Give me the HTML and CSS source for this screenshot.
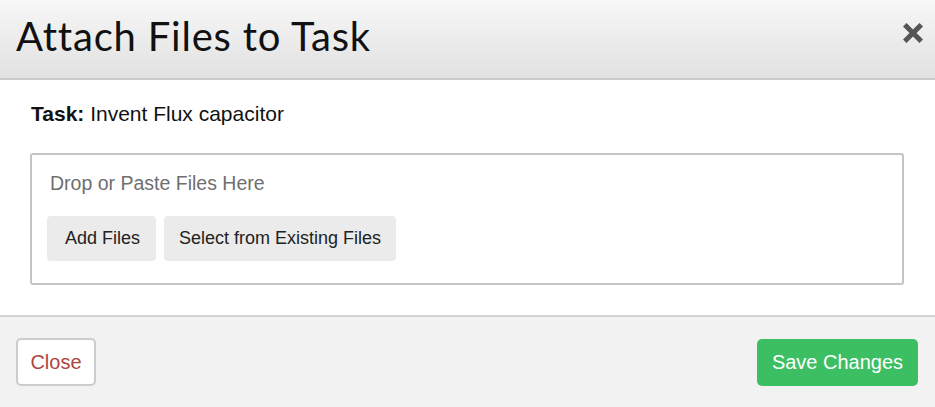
FILE: index.html
```html
<!DOCTYPE html>
<html>
<head>
<meta charset="utf-8">
<link rel="stylesheet" href="styles.css">
</head>
<body>
<div class="modal">
  <div class="modal-header">
    <h1 class="modal-title">Attach Files to Task</h1>
    <button class="close-x" aria-label="Close">
      <svg width="20" height="20" viewBox="0 0 20 20"><path d="M3.5 3.5 L16.5 16.5 M16.5 3.5 L3.5 16.5" stroke="#555" stroke-width="5" stroke-linecap="square"/></svg>
    </button>
  </div>
  <div class="modal-body">
    <p class="task-line"><strong>Task:</strong> Invent Flux capacitor</p>
    <div class="dropzone">
      <div class="drop-hint">Drop or Paste Files Here</div>
      <div class="drop-actions">
        <button class="btn-gray btn-add">Add Files</button>
        <button class="btn-gray">Select from Existing Files</button>
      </div>
    </div>
  </div>
  <div class="modal-footer">
    <button class="btn-close">Close</button>
    <button class="btn-save">Save Changes</button>
  </div>
</div>
</body>
</html>
```
FILE: styles.css
```css
html, body {
  margin: 0;
  padding: 0;
  background: #fff;
}
body {
  font-family: "Liberation Sans", Arial, sans-serif;
  color: #111;
}
.modal {
  width: 935px;
  height: 407px;
  display: flex;
  flex-direction: column;
}
.modal-header {
  height: 78px;
  border-bottom: 2px solid #c9c9c9;
  background: linear-gradient(#f7f7f7, #e1e1e1);
  display: flex;
  align-items: center;
  justify-content: space-between;
  padding: 0 12px 0 16px;
}
.modal-title {
  margin: 0;
  font-family: Lato, "Open Sans", sans-serif;
  font-weight: 400;
  font-size: 40px;
  letter-spacing: 0.8px;
  line-height: 48px;
  color: #111;
  margin-top: -6px;
}
.close-x {
  border: 0;
  background: none;
  padding: 0;
  width: 20px;
  height: 20px;
  display: flex;
  margin-top: -12px;
}
.modal-body {
  flex: 1;
  padding: 22px 31px 0 30px;
}
.task-line {
  margin: 0;
  font-size: 21px;
  line-height: 24px;
  color: #111;
  padding-left: 1px;
}
.dropzone {
  margin-top: 27px;
  border: 2px solid #c4c4c4;
  border-radius: 3px;
  box-sizing: border-box;
  height: 132px;
  padding: 17px 15px 0 15px;
}
.drop-hint {
  font-size: 19.5px;
  line-height: 22px;
  color: #6f6f6f;
  padding-left: 3px;
}
.drop-actions {
  margin-top: 22px;
  display: flex;
  gap: 8px;
}
.btn-gray {
  font-family: "Liberation Sans", Arial, sans-serif;
  font-size: 18px;
  color: #222;
  background: #ebebeb;
  border: 0;
  border-radius: 4px;
  height: 45px;
  width: 232px;
  padding: 0;
}
.btn-add {
  width: 109px;
  padding-left: 2px;
}
.modal-footer {
  height: 90px;
  flex: none;
  border-top: 2px solid #d3d3d3;
  background: #f2f2f2;
  display: flex;
  align-items: center;
  justify-content: space-between;
  padding: 0 17px 0 16px;
}
.btn-close {
  font-family: "Liberation Sans", Arial, sans-serif;
  font-size: 20px;
  color: #b0443f;
  background: #fff;
  border: 2px solid #cccccc;
  border-radius: 5px;
  height: 48px;
  width: 80px;
}
.btn-save {
  font-family: "Liberation Sans", Arial, sans-serif;
  font-size: 20px;
  color: #fff;
  background: #3cbf63;
  border: 0;
  border-radius: 5px;
  height: 47px;
  width: 161px;
}
```
